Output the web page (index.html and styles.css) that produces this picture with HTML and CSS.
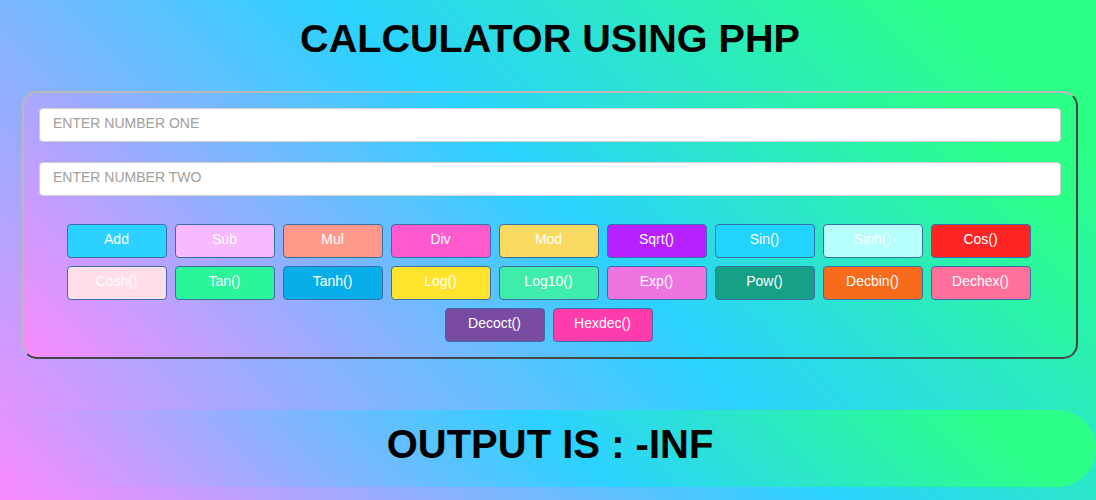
FILE: index.html
```html
<!DOCTYPE html>
<html>
<head>
<meta charset="utf-8">
<title>Calculator using PHP</title>
<link rel="stylesheet" href="styles.css">
</head>
<body>
<h1 class="title">CALCULATOR USING PHP</h1>
<form class="calc">
  <input class="field" type="text" placeholder="ENTER NUMBER ONE">
  <input class="field" type="text" placeholder="ENTER NUMBER TWO">
  <div class="ops">
    <button type="button" class="op op-add">Add</button>
    <button type="button" class="op op-sub">Sub</button>
    <button type="button" class="op op-mul">Mul</button>
    <button type="button" class="op op-div">Div</button>
    <button type="button" class="op op-mod">Mod</button>
    <button type="button" class="op op-sqrt">Sqrt()</button>
    <button type="button" class="op op-sin">Sin()</button>
    <button type="button" class="op op-sinh">Sinh()</button>
    <button type="button" class="op op-cos">Cos()</button>
    <button type="button" class="op op-cosh">Cosh()</button>
    <button type="button" class="op op-tan">Tan()</button>
    <button type="button" class="op op-tanh">Tanh()</button>
    <button type="button" class="op op-log">Log()</button>
    <button type="button" class="op op-log10">Log10()</button>
    <button type="button" class="op op-exp">Exp()</button>
    <button type="button" class="op op-pow">Pow()</button>
    <button type="button" class="op op-decbin">Decbin()</button>
    <button type="button" class="op op-dechex">Dechex()</button>
    <button type="button" class="op op-decoct">Decoct()</button>
    <button type="button" class="op op-hexdec">Hexdec()</button>
  </div>
</form>
<h2 class="output">OUTPUT IS : -INF</h2>
</body>
</html>
```
FILE: styles.css
```css
html {
  min-height: 100%;
}

body {
  margin: 0;
  min-height: 100vh;
  font-family: "Liberation Sans", Arial, sans-serif;
  background-color: #FA8BFF;
  background-image: linear-gradient(45deg, #FA8BFF 0%, #2BD2FF 52%, #2BFF88 90%);
}

.title {
  margin: 0;
  padding: 15px 0 0 4px;
  font-size: 39.6px;
  line-height: 46px;
  font-weight: bold;
  text-align: center;
  color: #000;
}

.calc {
  margin: 30px 18px 0 22px;
  padding: 15px 15px 15px;
  border: 2px solid;
  border-color: #b9b9b9 #454545 #454545 #b9b9b9;
  border-radius: 15px;
  background-image: linear-gradient(45deg, #FA8BFF 0%, #2BD2FF 52%, #2BFF88 90%);
  display: flex;
  flex-direction: column;
}

.field {
  box-sizing: border-box;
  height: 34px;
  padding: 0 13px 5px;
  border: 1px solid #cfcfcf;
  border-radius: 4px;
  background: #fff;
  font-family: inherit;
  font-size: 14px;
  color: #333;
}

.field + .field {
  margin-top: 20px;
}

.field::placeholder {
  color: #a39e9b;
}

.ops {
  margin-top: 28px;
  padding-right: 3px;
  display: flex;
  flex-wrap: wrap;
  justify-content: center;
  gap: 8px;
}

.op {
  box-sizing: border-box;
  width: 100px;
  height: 34px;
  padding: 0 0 4px;
  border: 1px solid #3a6ea5;
  border-radius: 4px;
  color: #fff;
  font-family: inherit;
  font-size: 14px;
}

.op-add { background: #2BD2FF; }
.op-sub { background: #F9B9FF; }
.op-mul { background: #FF9A8B; }
.op-div { background: #FF5ACD; }
.op-mod { background: #FBDA61; }
.op-sqrt { background: #B721FF; }
.op-sin { background: #21D4FD; }
.op-sinh { background: #B5FFFC; }
.op-cos { background: #FF2525; }
.op-cosh { background: #FFDEE9; }
.op-tan { background: #2AF598; }
.op-tanh { background: #08AEEA; }
.op-log { background: #FFE32C; }
.op-log10 { background: #3EECAC; }
.op-exp { background: #EE74E1; }
.op-pow { background: #16A085; }
.op-decbin { background: #F76B1C; }
.op-dechex { background: #FF719A; }
.op-decoct { background: #784BA0; }
.op-hexdec { background: #FF3CAC; }

.output {
  margin: 51px 0 0;
  height: 77px;
  box-sizing: border-box;
  padding: 0 0 9px 4px;
  line-height: 68px;
  font-size: 40px;
  font-weight: bold;
  text-align: center;
  color: #000;
  border-radius: 0 40px 40px 0;
  background-image: linear-gradient(45deg, #FA8BFF 0%, #2BD2FF 52%, #2BFF88 90%);
}
```
